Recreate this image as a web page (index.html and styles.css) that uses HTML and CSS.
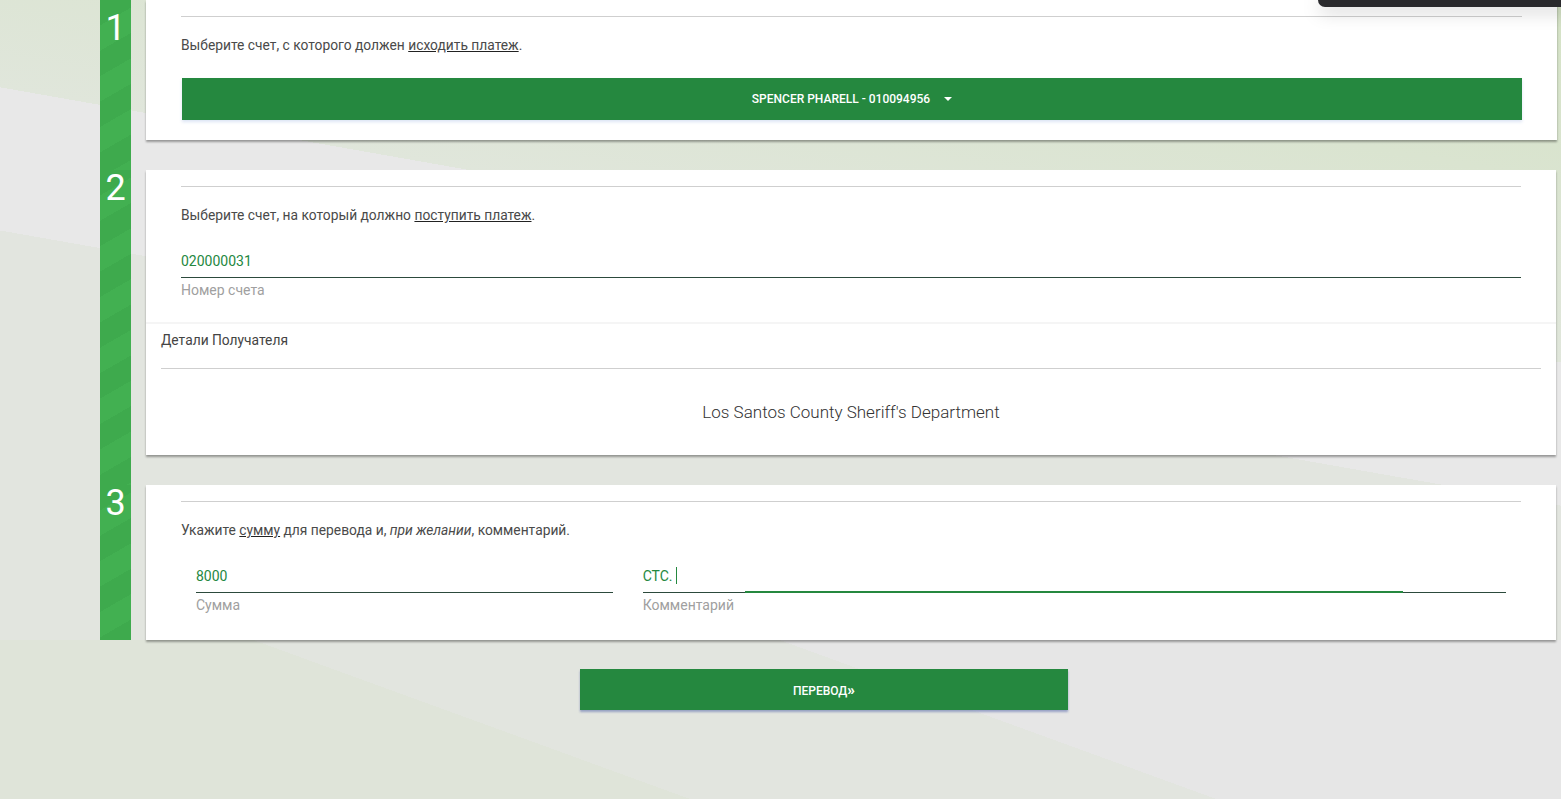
FILE: index.html
```html
<!DOCTYPE html>
<html lang="ru">
<head>
    <meta charset="UTF-8">
    <meta name="viewport" content="width=device-width, initial-scale=1.0">
    <title>Перевод</title>
    <link rel="stylesheet" href="styles.css">
</head>
<body>
    <!-- Transfer wizard -->
    <div class="wizard">
        <!-- Step 1: source account -->
        <div class="step">
            <div class="step-num">1</div>
            <div class="card">
                <div class="card-body">
                    <hr class="rule">
                    <p class="hint">Выберите счет, с которого должен <u>исходить платеж</u>.</p>
                    <button class="dropdown">SPENCER PHARELL - 010094956<span class="caret"></span></button>
                </div>
            </div>
        </div>

        <!-- Step 2: target account -->
        <div class="step">
            <div class="step-num">2</div>
            <div class="card">
                <div class="card-body card-body-account">
                    <hr class="rule">
                    <p class="hint">Выберите счет, на который должно <u>поступить платеж</u>.</p>
                    <div class="field">
                        <div class="field-value">020000031</div>
                        <div class="field-label">Номер счета</div>
                    </div>
                </div>
                <div class="recipient">
                    <div class="recipient-title">Детали Получателя</div>
                    <hr class="rule">
                    <div class="recipient-name">Los Santos County Sheriff's Department</div>
                </div>
            </div>
        </div>

        <!-- Step 3: amount and comment -->
        <div class="step">
            <div class="step-num">3</div>
            <div class="card">
                <div class="card-body card-body-last">
                    <hr class="rule">
                    <p class="hint">Укажите <u>сумму</u> для перевода и, <em>при желании</em>, комментарий.</p>
                    <div class="field-row">
                        <div class="field field-sum">
                            <div class="field-value">8000</div>
                            <div class="field-label">Сумма</div>
                        </div>
                        <div class="field field-comment focused">
                            <div class="field-value">СТС.<span class="cursor"></span></div>
                            <div class="field-label">Комментарий</div>
                        </div>
                    </div>
                </div>
            </div>
        </div>
    </div>

    <div class="actions">
        <button class="submit">ПЕРЕВОД<b>»</b></button>
    </div>

    <!-- Notification peeking from the top -->
    <div class="toast"></div>
</body>
</html>
```

FILE: styles.css
```css
/* Page and swoosh background */
html {
    height: 100%;
}

body {
    margin: 0;
    min-height: 100%;
    overflow: hidden;
    font-family: Roboto, "Liberation Sans", sans-serif;
    color: #4a4a4a;
    background-color: #e6e6e6;
    background-image:
        linear-gradient(20deg, #dfe4d9 236px, #e2e5df 236px, #e2e5df 416px, #e6e6e6 416px),
        linear-gradient(190deg, #d4e2c5 0, #e0e6db 357px, #e8e8e8 357px, #e8e8e8 498px, #e2e5df 498px);
    background-size: 100% 159px, 100% 100%;
    background-position: 0 640px, 0 0;
    background-repeat: no-repeat;
}

/* Wizard layout */
.wizard {
    margin-left: 100px;
    width: 1456px;
}

.step {
    display: flex;
    column-gap: 15px;
}

.step-num {
    flex: 0 0 31px;
    color: #fff;
    font-size: 36px;
    line-height: 1;
    text-align: center;
    background-color: #40ad4f;
    background-image: repeating-linear-gradient(150deg, #3eaa4d 0 22px, #42b051 22px 44px);
}

.step:first-child .step-num {
    padding-top: 10px;
}

.card {
    flex: 1;
    margin-bottom: 30px;
    background: #fff;
    box-shadow: 0 2px 2px rgba(0, 0, 0, 0.35);
}

.step:last-child .card {
    margin-bottom: 0;
}

.card-body {
    padding: 16px 35px 20px;
}

.card-body-account {
    padding-bottom: 23px;
}

.card-body-last {
    padding-bottom: 26px;
}

.rule {
    margin: 0;
    border: none;
    border-top: 1px solid #cfcfcf;
}

.hint {
    margin: 18px 0 0;
    font-size: 13.8px;
    line-height: 20px;
}

.hint u {
    text-decoration-color: #222;
}

/* Account dropdown */
.dropdown {
    display: flex;
    align-items: center;
    justify-content: center;
    width: 1340px;
    height: 42px;
    margin: 23px 0 0 1px;
    border: none;
    background: #25883f;
    color: #fff;
    font-family: inherit;
    font-size: 12px;
    font-weight: 500;
    box-shadow: 0 2px 3px rgba(80, 120, 200, 0.2);
    cursor: pointer;
}

.caret {
    margin-left: 14px;
    border-left: 4px solid transparent;
    border-right: 4px solid transparent;
    border-top: 4px solid #fff;
}

/* Text fields */
.field {
    margin-top: 24px;
}

.field-value {
    position: relative;
    height: 24px;
    padding-bottom: 4px;
    border-bottom: 1px solid #2c4a3c;
    color: #25883f;
    font-size: 14px;
    line-height: 24px;
}

.field-label {
    margin-top: 3px;
    color: #a0a0a0;
    font-size: 14px;
    line-height: 18px;
}

.field-row {
    display: grid;
    grid-template-columns: 1fr 2fr;
    margin-top: 24px;
}

.field-row .field {
    margin-top: 0;
    padding: 0 15px;
}

.cursor {
    display: inline-block;
    width: 1px;
    height: 17px;
    margin-left: 3px;
    vertical-align: -3px;
    background: #25883f;
}

/* Focus underline growing from the middle */
.focused .field-value::after {
    content: "";
    position: absolute;
    left: 50%;
    bottom: -1px;
    width: 658px;
    height: 2px;
    margin-left: -329px;
    background: #25883f;
}

/* Recipient details */
.recipient {
    border-top: 2px solid #f5f5f5;
    padding: 7px 15px 32px;
}

.recipient-title {
    margin-bottom: 19px;
    font-size: 13.8px;
    line-height: 18px;
    color: #444;
}

.recipient-name {
    margin-top: 32px;
    text-align: center;
    font-size: 17px;
    font-weight: 300;
    line-height: 22px;
    color: #333;
}

/* Submit button */
.actions {
    padding: 29px 0 0 580px;
}

.submit {
    width: 488px;
    height: 41px;
    border: none;
    background: #25883f;
    color: #fff;
    font-family: inherit;
    font-size: 12px;
    font-weight: 500;
    box-shadow: 0 2px 2px rgba(60, 80, 160, 0.45);
    cursor: pointer;
}

.submit b {
    font-size: 15px;
    font-weight: 900;
}

/* Dark toast at top right */
.toast {
    position: fixed;
    top: 0;
    left: 1318px;
    width: 260px;
    height: 7px;
    border-radius: 0 0 0 8px;
    background: #2a2a2d;
    box-shadow: 0 4px 18px rgba(0, 0, 0, 0.25);
}
```
